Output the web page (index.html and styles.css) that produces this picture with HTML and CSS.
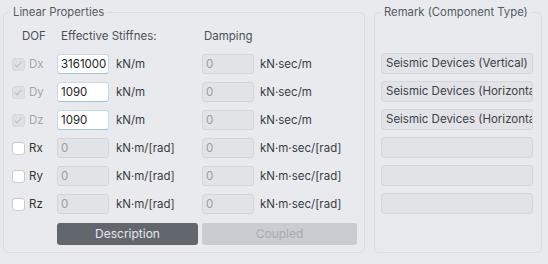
FILE: index.html
```html
<!DOCTYPE html>
<html>
<head>
<meta charset="utf-8">
<link rel="stylesheet" href="styles.css">
</head>
<body>
<div class="wrap">
  <fieldset class="group linear">
    <legend>Linear Properties</legend>
    <div class="grid">
      <div class="hdr hdr-dof">DOF</div>
      <div class="hdr hdr-stiff">Effective Stiffnes:</div>
      <div class="hdr hdr-damp">Damping</div>

      <label class="dof disabled"><span class="cb checked"></span>Dx</label>
      <div class="inp active">3161000</div>
      <div class="unit">kN/m</div>
      <div class="inp off">0</div>
      <div class="unit unit2">kN·sec/m</div>

      <label class="dof disabled"><span class="cb checked"></span>Dy</label>
      <div class="inp active">1090</div>
      <div class="unit">kN/m</div>
      <div class="inp off">0</div>
      <div class="unit unit2">kN·sec/m</div>

      <label class="dof disabled"><span class="cb checked"></span>Dz</label>
      <div class="inp active">1090</div>
      <div class="unit">kN/m</div>
      <div class="inp off">0</div>
      <div class="unit unit2">kN·sec/m</div>

      <label class="dof"><span class="cb"></span>Rx</label>
      <div class="inp off">0</div>
      <div class="unit">kN·m/[rad]</div>
      <div class="inp off">0</div>
      <div class="unit unit2">kN·m·sec/[rad]</div>

      <label class="dof"><span class="cb"></span>Ry</label>
      <div class="inp off">0</div>
      <div class="unit">kN·m/[rad]</div>
      <div class="inp off">0</div>
      <div class="unit unit2">kN·m·sec/[rad]</div>

      <label class="dof"><span class="cb"></span>Rz</label>
      <div class="inp off">0</div>
      <div class="unit">kN·m/[rad]</div>
      <div class="inp off">0</div>
      <div class="unit unit2">kN·m·sec/[rad]</div>

      <div class="btn-row">
        <button class="btn btn-desc">Description</button>
        <button class="btn btn-coupled" disabled>Coupled</button>
      </div>
    </div>
  </fieldset>
  <fieldset class="group remark">
    <legend>Remark (Component Type)</legend>
    <div class="rlist">
      <div class="rspacer"></div>
      <div class="rbox">Seismic Devices (Vertical)</div>
      <div class="rbox">Seismic Devices (Horizontal)</div>
      <div class="rbox">Seismic Devices (Horizontal)</div>
      <div class="rbox"></div>
      <div class="rbox"></div>
      <div class="rbox"></div>
    </div>
  </fieldset>
</div>
</body>
</html>
```

FILE: styles.css
```css
html, body {
  margin: 0;
  padding: 0;
  background: #e9eaee;
  font-family: Inter, "Noto Sans", sans-serif;
  font-size: 11.5px;
  color: #333;
  width: 548px;
  height: 264px;
  overflow: hidden;
}

.wrap {
  display: flex;
  gap: 9px;
  padding: 3px 0 0 3px;
}

.group {
  margin: 0;
  border: 1px solid #dcdde1;
  border-radius: 5px;
  padding: 5px 7px 7px 8px;
  height: 250px;
  box-sizing: border-box;
  min-width: 0;
  flex: none;
}

.group legend {
  padding: 0 3px;
  margin-left: -2px;
  line-height: 18px;
  font-size: 11.3px;
  color: #555a60;
  white-space: nowrap;
}

.linear { width: 362px; }
.remark { width: 168px; padding-left: 6px; padding-right: 8px; }
.remark legend { margin-left: 0; }

.grid {
  display: grid;
  grid-template-columns: 45px 53px 92px 53px auto;
  grid-template-rows: 20px repeat(6, 20px) 22px;
  row-gap: 8px;
  align-items: center;
}

.hdr { color: #4d5156; white-space: nowrap; overflow: hidden; }
.hdr-dof { padding-left: 10px; }
.hdr-stiff { grid-column: 2 / 4; padding-left: 4px; width: 96px; }
.hdr-damp { grid-column: 4 / 6; padding-left: 2px; }

.dof {
  display: flex;
  align-items: center;
  gap: 4px;
  color: #333;
}
.dof.disabled { color: #a3a6ab; }

.cb {
  width: 11px;
  height: 11px;
  border: 1px solid #c8cace;
  border-radius: 3px;
  background: #fff;
  position: relative;
}
.cb.checked {
  background: #dfe0e3;
  border-color: #d6d7da;
}
.cb.checked::after {
  content: "";
  position: absolute;
  left: 3px;
  top: 1px;
  width: 3px;
  height: 6px;
  border: solid #b9bbbf;
  border-width: 0 1.5px 1.5px 0;
  transform: rotate(40deg);
}

.inp {
  box-sizing: border-box;
  height: 20px;
  width: 52px;
  border: 1px solid #d2d4d8;
  border-radius: 3px;
  padding: 0 3px;
  line-height: 18px;
  white-space: nowrap;
  overflow: hidden;
}
.inp.active {
  background: #fff;
  color: #1e1e1e;
  border-color: #c9d8e6;
  border-bottom-color: #9fc3e6;
}
.inp.off {
  background: #e2e3e6;
  color: #9a9da2;
}

.unit { padding-left: 6px; white-space: nowrap; color: #3a3d41; }
.unit2 { padding-left: 5px; }

.btn-row {
  grid-column: 2 / 6;
  display: flex;
  gap: 4px;
  margin-top: 1px;
}
.btn {
  height: 22px;
  border: none;
  border-radius: 3px;
  font-family: inherit;
  font-size: 12px;
  padding: 0;
}
.btn-desc { width: 141px; background: #62676e; color: #e6e8eb; }
.btn-coupled { width: 155px; background: #c9ccd0; color: #a7abb0; }

.rlist {
  display: flex;
  flex-direction: column;
  gap: 7px;
}
.rspacer { height: 20px; }
.rbox {
  box-sizing: border-box;
  height: 21px;
  width: 152px;
  background: #e2e3e6;
  border: 1px solid #d5d7da;
  border-radius: 3px;
  padding: 0 4px;
  line-height: 19px;
  white-space: nowrap;
  overflow: hidden;
  color: #3e4146;
}
```
